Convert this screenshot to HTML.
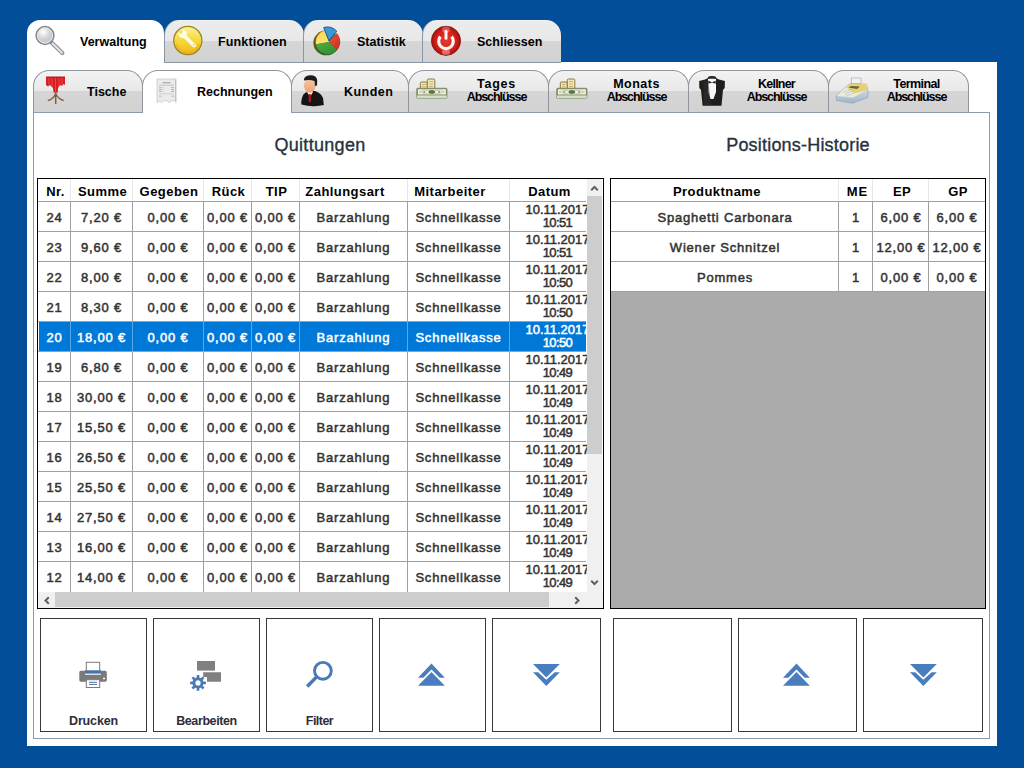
<!DOCTYPE html><html><head><meta charset='utf-8'><style>
*{margin:0;padding:0;box-sizing:border-box}
html,body{width:1024px;height:768px;overflow:hidden;background:#024e98;font-family:"Liberation Sans",sans-serif}
.a{position:absolute}
.tab{position:absolute;border-left:1px solid #8a96a4;border-radius:15px 15px 0 0;
 background:linear-gradient(#f6f6f6 0,#ececec 1.5px,#e8e8e8 21px,#d6d6d6 21px,#d2d2d2 100%);overflow:hidden}
.tab.act{background:#fff;border:none;border-radius:13px 13px 0 0}
.lbl{position:absolute;font-weight:bold;font-size:12.5px;color:#000;white-space:nowrap;line-height:13px}
.itab{position:absolute;border:1px solid #8e959c;border-bottom:none;border-radius:16px 16px 0 0;
 background:linear-gradient(#f2f2f2 0,#e8e8e8 20px,#d6d6d6 20px,#d2d2d2 100%);overflow:hidden}
.itab.act{background:#fff}
.cell{position:absolute;font-weight:normal;-webkit-text-stroke:0.5px currentColor;font-size:13px;color:#333;white-space:nowrap;text-align:center;line-height:13px;letter-spacing:0.8px}
.cur span{letter-spacing:0.8px}
.hd{font-weight:bold;-webkit-text-stroke:0;letter-spacing:0.45px}
.btn{position:absolute;border:1px solid #383838;background:#fff}
</style></head><body>
<div class='a' style='left:27px;top:62px;width:970px;height:684px;background:#fff'></div>
<div class='tab act' style='left:27px;top:20px;width:137px;height:43px'></div>
<div class='tab' style='left:164px;top:20px;width:140px;height:42px'></div>
<div class='tab' style='left:303px;top:20px;width:120px;height:42px'></div>
<div class='tab' style='left:422px;top:20px;width:139px;height:42px'></div>
<div class='a' style='left:164px;top:62px;width:397px;height:1px;background:#8a96a4'></div>
<div class='lbl' style='left:80px;top:36px'>Verwaltung</div>
<div class='lbl' style='left:218px;top:36px;letter-spacing:0.15px'>Funktionen</div>
<div class='lbl' style='left:357px;top:36px'>Statistik</div>
<div class='lbl' style='left:477px;top:36px'>Schliessen</div>
<div class='a' style='left:33px;top:112px;width:957px;height:627px;border:1px solid #8e9aa6;background:#fff'></div>
<div class='itab' style='left:33px;top:70px;width:110px;height:42px'></div>
<div class='itab act' style='left:142px;top:70px;width:150px;height:43px'></div>
<div class='itab' style='left:291px;top:70px;width:118px;height:42px'></div>
<div class='itab' style='left:408px;top:70px;width:141px;height:42px'></div>
<div class='itab' style='left:548px;top:70px;width:141px;height:42px'></div>
<div class='itab' style='left:688px;top:70px;width:141px;height:42px'></div>
<div class='itab' style='left:828px;top:70px;width:141px;height:42px'></div>
<div class='a' style='left:143px;top:112px;width:148px;height:1px;background:#fff'></div>
<div class='lbl' style='left:87px;top:86px'>Tische</div>
<div class='lbl' style='left:197px;top:86px'>Rechnungen</div>
<div class='lbl' style='left:344px;top:86px;letter-spacing:0.45px'>Kunden</div>
<div class='lbl' style='left:446.5px;width:100px;text-align:center;top:78px;letter-spacing:0.75px'>Tages</div>
<div class='lbl' style='left:446.5px;width:100px;text-align:center;top:90.5px;letter-spacing:-1.05px'>Abschlüsse</div>
<div class='lbl' style='left:586.5px;width:100px;text-align:center;top:78px;letter-spacing:0.5px'>Monats</div>
<div class='lbl' style='left:586.5px;width:100px;text-align:center;top:90.5px;letter-spacing:-1.05px'>Abschlüsse</div>
<div class='lbl' style='left:726.5px;width:100px;text-align:center;top:78px;letter-spacing:-0.8px'>Kellner</div>
<div class='lbl' style='left:726.5px;width:100px;text-align:center;top:90.5px;letter-spacing:-1.05px'>Abschlüsse</div>
<div class='lbl' style='left:866.5px;width:100px;text-align:center;top:78px;letter-spacing:-0.6px'>Terminal</div>
<div class='lbl' style='left:866.5px;width:100px;text-align:center;top:90.5px;letter-spacing:-1.05px'>Abschlüsse</div>
<div class='a' style='left:220px;width:200px;text-align:center;top:134.5px;font-size:18px;color:#28323e;line-height:20px;letter-spacing:0.3px;-webkit-text-stroke:0.35px #28323e'>Quittungen</div>
<div class='a' style='left:698px;width:200px;text-align:center;top:134.5px;font-size:18px;color:#28323e;line-height:20px;letter-spacing:0.2px;-webkit-text-stroke:0.35px #28323e'>Positions-Historie</div>
<div class='a' style='left:37px;top:178px;width:567px;height:431px;border:1px solid #000;background:#fff;overflow:hidden'>
<div class='cell hd' style='left:1.5px;width:32px;top:6px;color:#000'>Nr.</div><div class='cell hd' style='left:33.5px;width:62px;top:6px;color:#000'>Summe</div><div class='a' style='left:32px;top:0px;width:1px;height:22px;background:#e8e8e8'></div><div class='cell hd' style='left:95.5px;width:71px;top:6px;color:#000'>Gegeben</div><div class='a' style='left:94px;top:0px;width:1px;height:22px;background:#e8e8e8'></div><div class='cell hd' style='left:166.5px;width:48px;top:6px;color:#000'>Rück</div><div class='a' style='left:165px;top:0px;width:1px;height:22px;background:#e8e8e8'></div><div class='cell hd' style='left:214.5px;width:48px;top:6px;color:#000'>TIP</div><div class='a' style='left:213px;top:0px;width:1px;height:22px;background:#e8e8e8'></div><div class='cell hd' style='left:253px;width:108px;top:6px;color:#000'>Zahlungsart</div><div class='a' style='left:261px;top:0px;width:1px;height:22px;background:#e8e8e8'></div><div class='cell hd' style='left:361px;width:102px;top:6px;color:#000'>Mitarbeiter</div><div class='a' style='left:369px;top:0px;width:1px;height:22px;background:#e8e8e8'></div><div class='cell hd' style='left:463px;width:97px;top:6px;color:#000'>Datum</div><div class='a' style='left:471px;top:0px;width:1px;height:22px;background:#e8e8e8'></div><div class='a' style='left:0px;top:22px;width:548px;height:1px;background:#a0a0a0'></div><div class='cell' style='left:0.5px;width:32px;top:31.5px;color:#333'><span>24</span></div><div class='cell cur' style='left:32.5px;width:62px;top:31.5px;color:#333'><span>7,20 €</span></div><div class='cell cur' style='left:94.5px;width:71px;top:31.5px;color:#333'><span>0,00 €</span></div><div class='cell cur' style='left:165.5px;width:48px;top:31.5px;color:#333'><span>0,00 €</span></div><div class='cell cur' style='left:213.5px;width:48px;top:31.5px;color:#333'><span>0,00 €</span></div><div class='cell' style='left:261.5px;width:108px;top:31.5px;color:#333'><span>Barzahlung</span></div><div class='cell' style='left:369.5px;width:102px;top:31.5px;color:#333'><span>Schnellkasse</span></div><div class='cell' style='left:471px;width:97px;top:24px;color:#333;letter-spacing:0'>10.11.2017<br><span style='letter-spacing:-0.6px'>10:51</span></div><div class='a' style='left:0px;top:52px;width:548px;height:1px;background:#a0a0a0'></div><div class='cell' style='left:0.5px;width:32px;top:61.5px;color:#333'><span>23</span></div><div class='cell cur' style='left:32.5px;width:62px;top:61.5px;color:#333'><span>9,60 €</span></div><div class='cell cur' style='left:94.5px;width:71px;top:61.5px;color:#333'><span>0,00 €</span></div><div class='cell cur' style='left:165.5px;width:48px;top:61.5px;color:#333'><span>0,00 €</span></div><div class='cell cur' style='left:213.5px;width:48px;top:61.5px;color:#333'><span>0,00 €</span></div><div class='cell' style='left:261.5px;width:108px;top:61.5px;color:#333'><span>Barzahlung</span></div><div class='cell' style='left:369.5px;width:102px;top:61.5px;color:#333'><span>Schnellkasse</span></div><div class='cell' style='left:471px;width:97px;top:54px;color:#333;letter-spacing:0'>10.11.2017<br><span style='letter-spacing:-0.6px'>10:51</span></div><div class='a' style='left:0px;top:82px;width:548px;height:1px;background:#a0a0a0'></div><div class='cell' style='left:0.5px;width:32px;top:91.5px;color:#333'><span>22</span></div><div class='cell cur' style='left:32.5px;width:62px;top:91.5px;color:#333'><span>8,00 €</span></div><div class='cell cur' style='left:94.5px;width:71px;top:91.5px;color:#333'><span>0,00 €</span></div><div class='cell cur' style='left:165.5px;width:48px;top:91.5px;color:#333'><span>0,00 €</span></div><div class='cell cur' style='left:213.5px;width:48px;top:91.5px;color:#333'><span>0,00 €</span></div><div class='cell' style='left:261.5px;width:108px;top:91.5px;color:#333'><span>Barzahlung</span></div><div class='cell' style='left:369.5px;width:102px;top:91.5px;color:#333'><span>Schnellkasse</span></div><div class='cell' style='left:471px;width:97px;top:84px;color:#333;letter-spacing:0'>10.11.2017<br><span style='letter-spacing:-0.6px'>10:50</span></div><div class='a' style='left:0px;top:112px;width:548px;height:1px;background:#a0a0a0'></div><div class='cell' style='left:0.5px;width:32px;top:121.5px;color:#333'><span>21</span></div><div class='cell cur' style='left:32.5px;width:62px;top:121.5px;color:#333'><span>8,30 €</span></div><div class='cell cur' style='left:94.5px;width:71px;top:121.5px;color:#333'><span>0,00 €</span></div><div class='cell cur' style='left:165.5px;width:48px;top:121.5px;color:#333'><span>0,00 €</span></div><div class='cell cur' style='left:213.5px;width:48px;top:121.5px;color:#333'><span>0,00 €</span></div><div class='cell' style='left:261.5px;width:108px;top:121.5px;color:#333'><span>Barzahlung</span></div><div class='cell' style='left:369.5px;width:102px;top:121.5px;color:#333'><span>Schnellkasse</span></div><div class='cell' style='left:471px;width:97px;top:114px;color:#333;letter-spacing:0'>10.11.2017<br><span style='letter-spacing:-0.6px'>10:50</span></div><div class='a' style='left:0px;top:142px;width:548px;height:1px;background:#a0a0a0'></div><div class='a' style='left:1px;top:143px;width:547px;height:29px;background:#0078d7'></div><div class='cell' style='left:0.5px;width:32px;top:151.5px;color:#fff'><span>20</span></div><div class='cell cur' style='left:32.5px;width:62px;top:151.5px;color:#fff'><span>18,00 €</span></div><div class='cell cur' style='left:94.5px;width:71px;top:151.5px;color:#fff'><span>0,00 €</span></div><div class='cell cur' style='left:165.5px;width:48px;top:151.5px;color:#fff'><span>0,00 €</span></div><div class='cell cur' style='left:213.5px;width:48px;top:151.5px;color:#fff'><span>0,00 €</span></div><div class='cell' style='left:261.5px;width:108px;top:151.5px;color:#fff'><span>Barzahlung</span></div><div class='cell' style='left:369.5px;width:102px;top:151.5px;color:#fff'><span>Schnellkasse</span></div><div class='cell' style='left:471px;width:97px;top:144px;color:#fff;letter-spacing:0'>10.11.2017<br><span style='letter-spacing:-0.6px'>10:50</span></div><div class='a' style='left:0px;top:172px;width:548px;height:1px;background:#a0a0a0'></div><div class='cell' style='left:0.5px;width:32px;top:181.5px;color:#333'><span>19</span></div><div class='cell cur' style='left:32.5px;width:62px;top:181.5px;color:#333'><span>6,80 €</span></div><div class='cell cur' style='left:94.5px;width:71px;top:181.5px;color:#333'><span>0,00 €</span></div><div class='cell cur' style='left:165.5px;width:48px;top:181.5px;color:#333'><span>0,00 €</span></div><div class='cell cur' style='left:213.5px;width:48px;top:181.5px;color:#333'><span>0,00 €</span></div><div class='cell' style='left:261.5px;width:108px;top:181.5px;color:#333'><span>Barzahlung</span></div><div class='cell' style='left:369.5px;width:102px;top:181.5px;color:#333'><span>Schnellkasse</span></div><div class='cell' style='left:471px;width:97px;top:174px;color:#333;letter-spacing:0'>10.11.2017<br><span style='letter-spacing:-0.6px'>10:49</span></div><div class='a' style='left:0px;top:202px;width:548px;height:1px;background:#a0a0a0'></div><div class='cell' style='left:0.5px;width:32px;top:211.5px;color:#333'><span>18</span></div><div class='cell cur' style='left:32.5px;width:62px;top:211.5px;color:#333'><span>30,00 €</span></div><div class='cell cur' style='left:94.5px;width:71px;top:211.5px;color:#333'><span>0,00 €</span></div><div class='cell cur' style='left:165.5px;width:48px;top:211.5px;color:#333'><span>0,00 €</span></div><div class='cell cur' style='left:213.5px;width:48px;top:211.5px;color:#333'><span>0,00 €</span></div><div class='cell' style='left:261.5px;width:108px;top:211.5px;color:#333'><span>Barzahlung</span></div><div class='cell' style='left:369.5px;width:102px;top:211.5px;color:#333'><span>Schnellkasse</span></div><div class='cell' style='left:471px;width:97px;top:204px;color:#333;letter-spacing:0'>10.11.2017<br><span style='letter-spacing:-0.6px'>10:49</span></div><div class='a' style='left:0px;top:232px;width:548px;height:1px;background:#a0a0a0'></div><div class='cell' style='left:0.5px;width:32px;top:241.5px;color:#333'><span>17</span></div><div class='cell cur' style='left:32.5px;width:62px;top:241.5px;color:#333'><span>15,50 €</span></div><div class='cell cur' style='left:94.5px;width:71px;top:241.5px;color:#333'><span>0,00 €</span></div><div class='cell cur' style='left:165.5px;width:48px;top:241.5px;color:#333'><span>0,00 €</span></div><div class='cell cur' style='left:213.5px;width:48px;top:241.5px;color:#333'><span>0,00 €</span></div><div class='cell' style='left:261.5px;width:108px;top:241.5px;color:#333'><span>Barzahlung</span></div><div class='cell' style='left:369.5px;width:102px;top:241.5px;color:#333'><span>Schnellkasse</span></div><div class='cell' style='left:471px;width:97px;top:234px;color:#333;letter-spacing:0'>10.11.2017<br><span style='letter-spacing:-0.6px'>10:49</span></div><div class='a' style='left:0px;top:262px;width:548px;height:1px;background:#a0a0a0'></div><div class='cell' style='left:0.5px;width:32px;top:271.5px;color:#333'><span>16</span></div><div class='cell cur' style='left:32.5px;width:62px;top:271.5px;color:#333'><span>26,50 €</span></div><div class='cell cur' style='left:94.5px;width:71px;top:271.5px;color:#333'><span>0,00 €</span></div><div class='cell cur' style='left:165.5px;width:48px;top:271.5px;color:#333'><span>0,00 €</span></div><div class='cell cur' style='left:213.5px;width:48px;top:271.5px;color:#333'><span>0,00 €</span></div><div class='cell' style='left:261.5px;width:108px;top:271.5px;color:#333'><span>Barzahlung</span></div><div class='cell' style='left:369.5px;width:102px;top:271.5px;color:#333'><span>Schnellkasse</span></div><div class='cell' style='left:471px;width:97px;top:264px;color:#333;letter-spacing:0'>10.11.2017<br><span style='letter-spacing:-0.6px'>10:49</span></div><div class='a' style='left:0px;top:292px;width:548px;height:1px;background:#a0a0a0'></div><div class='cell' style='left:0.5px;width:32px;top:301.5px;color:#333'><span>15</span></div><div class='cell cur' style='left:32.5px;width:62px;top:301.5px;color:#333'><span>25,50 €</span></div><div class='cell cur' style='left:94.5px;width:71px;top:301.5px;color:#333'><span>0,00 €</span></div><div class='cell cur' style='left:165.5px;width:48px;top:301.5px;color:#333'><span>0,00 €</span></div><div class='cell cur' style='left:213.5px;width:48px;top:301.5px;color:#333'><span>0,00 €</span></div><div class='cell' style='left:261.5px;width:108px;top:301.5px;color:#333'><span>Barzahlung</span></div><div class='cell' style='left:369.5px;width:102px;top:301.5px;color:#333'><span>Schnellkasse</span></div><div class='cell' style='left:471px;width:97px;top:294px;color:#333;letter-spacing:0'>10.11.2017<br><span style='letter-spacing:-0.6px'>10:49</span></div><div class='a' style='left:0px;top:322px;width:548px;height:1px;background:#a0a0a0'></div><div class='cell' style='left:0.5px;width:32px;top:331.5px;color:#333'><span>14</span></div><div class='cell cur' style='left:32.5px;width:62px;top:331.5px;color:#333'><span>27,50 €</span></div><div class='cell cur' style='left:94.5px;width:71px;top:331.5px;color:#333'><span>0,00 €</span></div><div class='cell cur' style='left:165.5px;width:48px;top:331.5px;color:#333'><span>0,00 €</span></div><div class='cell cur' style='left:213.5px;width:48px;top:331.5px;color:#333'><span>0,00 €</span></div><div class='cell' style='left:261.5px;width:108px;top:331.5px;color:#333'><span>Barzahlung</span></div><div class='cell' style='left:369.5px;width:102px;top:331.5px;color:#333'><span>Schnellkasse</span></div><div class='cell' style='left:471px;width:97px;top:324px;color:#333;letter-spacing:0'>10.11.2017<br><span style='letter-spacing:-0.6px'>10:49</span></div><div class='a' style='left:0px;top:352px;width:548px;height:1px;background:#a0a0a0'></div><div class='cell' style='left:0.5px;width:32px;top:361.5px;color:#333'><span>13</span></div><div class='cell cur' style='left:32.5px;width:62px;top:361.5px;color:#333'><span>16,00 €</span></div><div class='cell cur' style='left:94.5px;width:71px;top:361.5px;color:#333'><span>0,00 €</span></div><div class='cell cur' style='left:165.5px;width:48px;top:361.5px;color:#333'><span>0,00 €</span></div><div class='cell cur' style='left:213.5px;width:48px;top:361.5px;color:#333'><span>0,00 €</span></div><div class='cell' style='left:261.5px;width:108px;top:361.5px;color:#333'><span>Barzahlung</span></div><div class='cell' style='left:369.5px;width:102px;top:361.5px;color:#333'><span>Schnellkasse</span></div><div class='cell' style='left:471px;width:97px;top:354px;color:#333;letter-spacing:0'>10.11.2017<br><span style='letter-spacing:-0.6px'>10:49</span></div><div class='a' style='left:0px;top:382px;width:548px;height:1px;background:#a0a0a0'></div><div class='cell' style='left:0.5px;width:32px;top:391.5px;color:#333'><span>12</span></div><div class='cell cur' style='left:32.5px;width:62px;top:391.5px;color:#333'><span>14,00 €</span></div><div class='cell cur' style='left:94.5px;width:71px;top:391.5px;color:#333'><span>0,00 €</span></div><div class='cell cur' style='left:165.5px;width:48px;top:391.5px;color:#333'><span>0,00 €</span></div><div class='cell cur' style='left:213.5px;width:48px;top:391.5px;color:#333'><span>0,00 €</span></div><div class='cell' style='left:261.5px;width:108px;top:391.5px;color:#333'><span>Barzahlung</span></div><div class='cell' style='left:369.5px;width:102px;top:391.5px;color:#333'><span>Schnellkasse</span></div><div class='cell' style='left:471px;width:97px;top:384px;color:#333;letter-spacing:0'>10.11.2017<br><span style='letter-spacing:-0.6px'>10:49</span></div><div class='a' style='left:32px;top:22px;width:1px;height:400px;background:#a0a0a0'></div><div class='a' style='left:94px;top:22px;width:1px;height:400px;background:#a0a0a0'></div><div class='a' style='left:165px;top:22px;width:1px;height:400px;background:#a0a0a0'></div><div class='a' style='left:213px;top:22px;width:1px;height:400px;background:#a0a0a0'></div><div class='a' style='left:261px;top:22px;width:1px;height:400px;background:#a0a0a0'></div><div class='a' style='left:369px;top:22px;width:1px;height:400px;background:#a0a0a0'></div><div class='a' style='left:471px;top:22px;width:1px;height:400px;background:#a0a0a0'></div><div class='a' style='left:32px;top:143px;width:1px;height:29px;background:#5aa6e6'></div><div class='a' style='left:94px;top:143px;width:1px;height:29px;background:#5aa6e6'></div><div class='a' style='left:165px;top:143px;width:1px;height:29px;background:#5aa6e6'></div><div class='a' style='left:213px;top:143px;width:1px;height:29px;background:#5aa6e6'></div><div class='a' style='left:261px;top:143px;width:1px;height:29px;background:#5aa6e6'></div><div class='a' style='left:369px;top:143px;width:1px;height:29px;background:#5aa6e6'></div><div class='a' style='left:471px;top:143px;width:1px;height:29px;background:#5aa6e6'></div><div class='a' style='left:549px;top:0px;width:15px;height:413px;background:#f0f0f0'></div><div class='a' style='left:549px;top:17px;width:15px;height:258px;background:#cdcdcd'></div><div class='a' style='left:0px;top:413px;width:565px;height:16px;background:#f0f0f0'></div><div class='a' style='left:17px;top:413px;width:494px;height:15px;background:#cdcdcd'></div><svg class='a' style='left:551px;top:4px' width='11' height='10'><path d='M2.2 7.3 L5.5 4 L8.8 7.3' fill='none' stroke='#606060' stroke-width='2'/></svg><svg class='a' style='left:551px;top:399px' width='11' height='10'><path d='M2.2 2.7 L5.5 6 L8.8 2.7' fill='none' stroke='#606060' stroke-width='2'/></svg><svg class='a' style='left:4px;top:416px' width='10' height='11'><path d='M6.8 2.2 L3.5 5.5 L6.8 8.8' fill='none' stroke='#606060' stroke-width='2'/></svg><svg class='a' style='left:534px;top:416px' width='10' height='11'><path d='M3.2 2.2 L6.5 5.5 L3.2 8.8' fill='none' stroke='#606060' stroke-width='2'/></svg>
</div>
<div class='a' style='left:610px;top:178px;width:376px;height:431px;border:1px solid #000;background:#ababab;overflow:hidden'>
<div class='a' style='left:0;top:0;width:374px;height:113px;background:#fff'></div><div class='cell hd' style='left:-8px;width:228px;top:6px;color:#000;'>Produktname</div><div class='cell hd' style='left:229.5px;width:34px;top:6px;color:#000;letter-spacing:1px;'>ME</div><div class='a' style='left:227px;top:0px;width:1px;height:22px;background:#e8e8e8'></div><div class='cell hd' style='left:263px;width:56px;top:6px;color:#000;'>EP</div><div class='a' style='left:261px;top:0px;width:1px;height:22px;background:#e8e8e8'></div><div class='cell hd' style='left:319px;width:56px;top:6px;color:#000;'>GP</div><div class='a' style='left:317px;top:0px;width:1px;height:22px;background:#e8e8e8'></div><div class='a' style='left:0px;top:22px;width:374px;height:1px;background:#a0a0a0'></div><div class='cell' style='left:0px;width:228px;top:31.5px'><span>Spaghetti Carbonara</span></div><div class='cell' style='left:228px;width:34px;top:31.5px'><span>1</span></div><div class='cell cur' style='left:262px;width:56px;top:31.5px'><span>6,00 €</span></div><div class='cell cur' style='left:318px;width:56px;top:31.5px'><span>6,00 €</span></div><div class='a' style='left:0px;top:52px;width:374px;height:1px;background:#a0a0a0'></div><div class='cell' style='left:0px;width:228px;top:61.5px'><span>Wiener Schnitzel</span></div><div class='cell' style='left:228px;width:34px;top:61.5px'><span>1</span></div><div class='cell cur' style='left:262px;width:56px;top:61.5px'><span>12,00 €</span></div><div class='cell cur' style='left:318px;width:56px;top:61.5px'><span>12,00 €</span></div><div class='a' style='left:0px;top:82px;width:374px;height:1px;background:#a0a0a0'></div><div class='cell' style='left:0px;width:228px;top:91.5px'><span>Pommes</span></div><div class='cell' style='left:228px;width:34px;top:91.5px'><span>1</span></div><div class='cell cur' style='left:262px;width:56px;top:91.5px'><span>0,00 €</span></div><div class='cell cur' style='left:318px;width:56px;top:91.5px'><span>0,00 €</span></div><div class='a' style='left:0px;top:112px;width:374px;height:1px;background:#a0a0a0'></div><div class='a' style='left:227px;top:22px;width:1px;height:91px;background:#a0a0a0'></div><div class='a' style='left:261px;top:22px;width:1px;height:91px;background:#a0a0a0'></div><div class='a' style='left:317px;top:22px;width:1px;height:91px;background:#a0a0a0'></div>
</div>
<div class='btn' style='left:40px;top:618px;width:107px;height:114px'></div>
<div class='btn' style='left:153px;top:618px;width:107px;height:114px'></div>
<div class='btn' style='left:266px;top:618px;width:107px;height:114px'></div>
<div class='btn' style='left:379px;top:618px;width:107px;height:114px'></div>
<div class='btn' style='left:492px;top:618px;width:109px;height:114px'></div>
<div class='btn' style='left:613px;top:618px;width:119px;height:114px'></div>
<div class='btn' style='left:738px;top:618px;width:119px;height:114px'></div>
<div class='btn' style='left:863px;top:618px;width:120px;height:114px'></div>
<div class='lbl' style='left:40px;width:107px;text-align:center;top:715.3px;color:#2d2d3a;letter-spacing:-0.15px'>Drucken</div>
<div class='lbl' style='left:153px;width:107px;text-align:center;top:715.3px;color:#2d2d3a;letter-spacing:-0.4px'>Bearbeiten</div>
<div class='lbl' style='left:266px;width:107px;text-align:center;top:715.3px;color:#2d2d3a;letter-spacing:-0.55px'>Filter</div>
<svg class='a' style='left:0;top:0' width='1024' height='768' viewBox='0 0 1024 768'><defs>
<radialGradient id="glass" cx="0.4" cy="0.3" r="0.75"><stop offset="0" stop-color="#ffffff"/><stop offset="0.55" stop-color="#cfcfcf"/><stop offset="0.85" stop-color="#b9cde2"/><stop offset="1" stop-color="#d8e8f8"/></radialGradient>
<linearGradient id="gold" x1="0" y1="0" x2="0" y2="1"><stop offset="0" stop-color="#fbf39a"/><stop offset="0.45" stop-color="#f6dc3c"/><stop offset="1" stop-color="#eeb818"/></linearGradient>
<radialGradient id="redg" cx="0.5" cy="0.5" r="0.5"><stop offset="0" stop-color="#e83a30"/><stop offset="0.7" stop-color="#d42018"/><stop offset="1" stop-color="#a01010"/></radialGradient>
<linearGradient id="face" x1="0" y1="0" x2="0" y2="1"><stop offset="0" stop-color="#f6c8a8"/><stop offset="1" stop-color="#f0a070"/></linearGradient>
<linearGradient id="blueb" x1="0" y1="0" x2="0" y2="1"><stop offset="0" stop-color="#dde8f2"/><stop offset="1" stop-color="#9fb4c8"/></linearGradient>
<linearGradient id="rim" x1="0" y1="0" x2="0" y2="1"><stop offset="0" stop-color="#8a6418"/><stop offset="0.5" stop-color="#6a5a18"/><stop offset="1" stop-color="#2a6a24"/></linearGradient>
<linearGradient id="yel" x1="0" y1="0" x2="0" y2="1"><stop offset="0" stop-color="#f8d850"/><stop offset="1" stop-color="#fbe27a"/></linearGradient>
<linearGradient id="grn" x1="0" y1="0" x2="1" y2="1"><stop offset="0" stop-color="#52b040"/><stop offset="1" stop-color="#2c8a34"/></linearGradient>
<linearGradient id="rd" x1="0" y1="0" x2="1" y2="1"><stop offset="0" stop-color="#e85a38"/><stop offset="1" stop-color="#c82828"/></linearGradient>
</defs>
<!-- Verwaltung magnifier -->
<line x1="52" y1="43" x2="62.3" y2="53" stroke="#8e8e8e" stroke-width="4.2" stroke-linecap="round"/>
<line x1="52.5" y1="43.5" x2="62" y2="52.7" stroke="#e6e6e6" stroke-width="2" stroke-linecap="round"/>
<circle cx="45" cy="35.5" r="8.9" fill="url(#glass)" stroke="#858585" stroke-width="1.5"/>
<circle cx="45" cy="35.5" r="7.6" fill="none" stroke="#ececec" stroke-width="0.8"/>
<!-- Funktionen wrench coin -->
<circle cx="187.8" cy="40.5" r="14.1" fill="url(#gold)" stroke="#9c8424" stroke-width="1.3"/>
<path d="M176 44 A12.5 12.5 0 0 0 199.6 44" fill="none" stroke="#e8a818" stroke-width="1.5" opacity="0.6"/>
<path d="M184.3 35.8 L194 45.5" stroke="#fffbe8" stroke-width="3.8" stroke-linecap="round"/>
<circle cx="182.6" cy="33.9" r="4.2" fill="#fffbe8"/>
<circle cx="180.8" cy="31.9" r="2" fill="#f7e060"/>
<circle cx="193.6" cy="45.1" r="0.8" fill="#d8b840"/>
<!-- Statistik pie -->
<ellipse cx="326.4" cy="42.8" rx="13.1" ry="12.5" fill="url(#rim)"/>
<path d="M329.1 42.1 L325.3 30.4 A12.2 12.2 0 0 0 316 44.2 Z" fill="url(#yel)"/>
<path d="M329.1 42.1 L316 44.2 A12.2 12.2 0 0 0 337 50 Z" fill="url(#grn)"/>
<path d="M329.1 42.1 L337 50 A12.2 12.2 0 0 0 336.6 33.1 Z" fill="url(#rd)"/>
<path d="M328.9 40.8 L323.7 27.5 A13 13 0 0 1 336.8 31.25 Z" fill="#3a98d6" stroke="#16508a" stroke-width="0.9" stroke-linejoin="round"/>
<!-- Schliessen power -->
<circle cx="446" cy="40.8" r="14.6" fill="url(#redg)" stroke="#8a1414" stroke-width="0.8"/>
<ellipse cx="446" cy="29.8" rx="4" ry="3.2" fill="#ffb0a8" opacity="0.4"/>
<ellipse cx="446" cy="52.2" rx="4" ry="2.6" fill="#ffc0b8" opacity="0.5"/>
<path d="M440.4 36.6 A7.3 7.3 0 1 0 451.6 36.6" fill="none" stroke="#fff4f4" stroke-width="3.2"/>
<line x1="446" y1="31.2" x2="446" y2="38.3" stroke="#fff4f4" stroke-width="3" stroke-linecap="round"/>
<!-- Tische table -->
<path d="M46 77 L65 77 L65 85 L63.5 84 L62 86 L60 85 L58 88 L57.8 92.5 L53.6 92.5 L53 88 L50 85 L48 86.5 L46 85 Z" fill="#d61e22"/>
<rect x="46" y="76.5" width="19" height="1.2" fill="#b81820"/>
<path d="M49 78 V85 M52 78 V87 M55.5 78 V92 M59 78 V87 M62 78 V85" stroke="#f06060" stroke-width="0.7"/>
<path d="M55.7 92 V104 M55.5 94 C54.5 96.5 51 99.6 47.8 100.6 M55.9 94 C56.9 96.5 60.4 99.6 63.6 100.5" fill="none" stroke="#84603a" stroke-width="1.5"/>
<!-- Rechnungen receipt -->
<path d="M157 79 H176 V102.5 Q174.5 99.8 172.2 100.6 Q170.2 101.4 169 102.6 Q167 99.8 164.5 100.6 Q162.5 101.4 161.5 102.6 Q159.5 99.8 157 102.5 Z" fill="#ebebeb" stroke="#c6c6c6" stroke-width="0.8"/>
<path d="M175.6 79.5 V101" stroke="#bdbdbd" stroke-width="1"/>
<path d="M162.5 82.8 H170.5" stroke="#9a9a9a" stroke-width="1"/>
<path d="M159 85.2 H174" stroke="#b4b4b4" stroke-width="0.7"/>
<path d="M159 87.6 H161.8 M163 87.6 H163.6 M171 87.6 H174 M159 89.5 H161.8 M163 89.5 H163.6 M171 89.5 H174 M159 91.4 H161.8 M163 91.4 H163.6 M171 91.4 H174" stroke="#a8a8a8" stroke-width="0.8"/>
<path d="M159 93.8 H174" stroke="#c0c0c0" stroke-width="0.6"/>
<path d="M159 96.2 H161.5 M171.5 96.2 H174" stroke="#a8a8a8" stroke-width="0.8"/>
<!-- Kunden person -->
<ellipse cx="314" cy="104" rx="10" ry="2.5" fill="#b8b8b8" opacity="0.6"/>
<path d="M301.3 104.5 Q301 96 305 93 L309 91 L315 91 Q321 93 323 98 L323.8 105 Q313 107.5 301.3 104.5 Z" fill="#141414"/>
<path d="M307 92 L310 97 L313 92 Z" fill="#f4f4f4"/>
<path d="M308.8 94 L310.8 94 L311 101.5 L309.8 102.5 L308.6 101.5 Z" fill="#c0101a"/>
<ellipse cx="309.7" cy="85.8" rx="5.8" ry="7" fill="url(#face)"/>
<path d="M303.8 80.5 Q304 75.5 310 75.2 Q316.5 75 317.2 80 L317 85.5 L315 86 L314.5 81 Q310 79.5 303.8 80.5 Z" fill="#1c1c1c"/>
<!-- money Tages & Monats -->
<g id="money">
<path d="M420.3 88.8 V83.2 Q420.3 82 421.5 82 H426 Q427.3 82 427.3 83.2 V88.8 Z" fill="#f2e6b0" stroke="#7e6a30" stroke-width="0.9"/>
<path d="M427.3 88.8 V80.2 Q427.3 79 428.5 79 H433.6 Q434.8 79 434.8 80.2 V88.8 Z" fill="#f4e8b4" stroke="#7e6a30" stroke-width="0.9"/>
<path d="M422 84.5 H425.6 M422 86.8 H425.6 M429 81.6 H433 M429 84 H433 M429 86.5 H433" stroke="#b09a58" stroke-width="0.7"/>
<rect x="416.5" y="88.2" width="30.6" height="10.2" rx="1.2" fill="#dfe8d0" stroke="#8a9478" stroke-width="0.8"/>
<rect x="417.3" y="88.8" width="29" height="6.2" fill="#f2f4dc" stroke="#5f6c4c" stroke-width="0.8"/>
<path d="M417.5 96.3 H446 M417.5 97.6 H446" stroke="#c8d8c0" stroke-width="0.6"/>
<ellipse cx="431.8" cy="91.9" rx="3.3" ry="1.9" fill="#5c7048"/>
<ellipse cx="424.3" cy="91.9" rx="1.1" ry="0.9" fill="#8a9a78"/>
<ellipse cx="439.2" cy="91.9" rx="1.1" ry="0.9" fill="#8a9a78"/>
<path d="M419 91.9 Q425 89.3 428.5 90.6 M435 90.6 Q438.5 89.3 444.6 91.9 M419 91.9 Q425 94.5 428.5 93.2 M435 93.2 Q438.5 94.5 444.6 91.9" fill="none" stroke="#a8b490" stroke-width="0.6"/>
</g>
<g transform="translate(140 0)">
<path d="M420.3 88.8 V83.2 Q420.3 82 421.5 82 H426 Q427.3 82 427.3 83.2 V88.8 Z" fill="#f2e6b0" stroke="#7e6a30" stroke-width="0.9"/>
<path d="M427.3 88.8 V80.2 Q427.3 79 428.5 79 H433.6 Q434.8 79 434.8 80.2 V88.8 Z" fill="#f4e8b4" stroke="#7e6a30" stroke-width="0.9"/>
<path d="M422 84.5 H425.6 M422 86.8 H425.6 M429 81.6 H433 M429 84 H433 M429 86.5 H433" stroke="#b09a58" stroke-width="0.7"/>
<rect x="416.5" y="88.2" width="30.6" height="10.2" rx="1.2" fill="#dfe8d0" stroke="#8a9478" stroke-width="0.8"/>
<rect x="417.3" y="88.8" width="29" height="6.2" fill="#f2f4dc" stroke="#5f6c4c" stroke-width="0.8"/>
<path d="M417.5 96.3 H446 M417.5 97.6 H446" stroke="#c8d8c0" stroke-width="0.6"/>
<ellipse cx="431.8" cy="91.9" rx="3.3" ry="1.9" fill="#5c7048"/>
<ellipse cx="424.3" cy="91.9" rx="1.1" ry="0.9" fill="#8a9a78"/>
<ellipse cx="439.2" cy="91.9" rx="1.1" ry="0.9" fill="#8a9a78"/>
<path d="M419 91.9 Q425 89.3 428.5 90.6 M435 90.6 Q438.5 89.3 444.6 91.9 M419 91.9 Q425 94.5 428.5 93.2 M435 93.2 Q438.5 94.5 444.6 91.9" fill="none" stroke="#a8b490" stroke-width="0.6"/>
</g>
<!-- Kellner tuxedo -->
<path d="M699.2 81 L705 79.5 L708 78 L716 78 L719 79.5 L724.9 81 L724.7 88 L723 90 L721.5 105.8 L702.6 105.8 L701 90 L699.3 88 Z" fill="#1e1e1e"/>
<path d="M708 78.5 L716 78.5 L716 92 L713.5 99 L710.5 99 L708 92 Z" fill="#f6f6f6"/>
<path d="M707.8 77 Q712 75.2 716.3 77 L715.5 79 Q712 77.5 708.5 79 Z" fill="#222"/>
<path d="M708.3 80.8 L712 82.3 L715.7 80.8 L715.7 83.8 L712 82.6 L708.3 83.8 Z" fill="#222"/>
<path d="M703 82 L708 79 L711 105 L704 105 Z" fill="#2e2e2e" opacity="0.6"/>
<!-- Terminal cash register -->
<path d="M836 96 L849 84 L866.5 84.5 L868 91 L868 97.5 L852.5 103.3 L836.5 100.5 Z" fill="url(#blueb)" stroke="#8da0b4" stroke-width="0.6"/>
<path d="M836.5 96 L849.5 84 L866.5 84.5 L867 90 L853 97.5 Z" fill="#ecebd8"/>
<path d="M846.5 87.5 L850 83 L866 83.5 L867.5 90 L855 93.5 Z" fill="#e6cf78"/>
<path d="M848.5 87.5 L851 86 L860 86.5 L857 89 Z" fill="#5d6a3a"/>
<rect x="851.5" y="78" width="9.5" height="5.5" fill="#f2f2f4" stroke="#a0a0a8" stroke-width="0.6"/>
<path d="M844 92 L852 89 M845 94 L853 91 M846.5 96 L854 93" stroke="#9aa0b0" stroke-width="0.8" stroke-dasharray="1.2 1"/>
<!-- printer -->
<rect x="86.3" y="662.3" width="13.4" height="9.5" fill="#fff" stroke="#7a7a7a" stroke-width="1"/>
<path d="M80.8 670.7 H85 V674.7 H101 V670.7 H105.3 Q106.8 670.7 106.8 672.2 V680.3 Q106.8 681.7 105.3 681.7 H80.8 Q79.3 681.7 79.3 680.3 V672.2 Q79.3 670.7 80.8 670.7 Z" fill="#7a7a7a"/>
<rect x="85" y="670.3" width="16" height="3.3" fill="#4a70a8"/>
<rect x="103" y="677.8" width="2" height="1.4" fill="#fff"/>
<rect x="86.3" y="679.7" width="13.4" height="7.8" fill="#fff" stroke="#7a7a7a" stroke-width="1"/>
<path d="M89 682.3 H97 M89 684.4 H97" stroke="#4a70a8" stroke-width="1"/>
<!-- bearbeiten -->
<rect x="197" y="661" width="18" height="9.6" fill="#808080"/>
<path d="M203.2 672.2 H221 V681.8 H207 L207 677 L203.2 677 Z" fill="#808080"/>
<g transform="translate(198 682.9)">
<path d="M-1.3 -7.8 H1.3 L1.5 -5.2 L3.7 -4.3 L5.6 -6 L7.4 -4.2 L5.7 -2.3 L6.5 -0.1 L-0 -0 Z" fill="none"/>
<circle r="5.6" fill="#4a7ab5"/>
<g fill="#4a7ab5">
<rect x="-1.3" y="-7.9" width="2.6" height="3"/>
<rect x="-1.3" y="4.9" width="2.6" height="3"/>
<rect x="-7.9" y="-1.3" width="3" height="2.6"/>
<rect x="4.9" y="-1.3" width="3" height="2.6"/>
<rect x="-1.3" y="-7.9" width="2.6" height="3" transform="rotate(45)"/>
<rect x="-1.3" y="-7.9" width="2.6" height="3" transform="rotate(135)"/>
<rect x="-1.3" y="-7.9" width="2.6" height="3" transform="rotate(225)"/>
<rect x="-1.3" y="-7.9" width="2.6" height="3" transform="rotate(315)"/>
</g>
<circle r="2.6" fill="#fff"/>
</g>
<!-- filter magnifier -->
<circle cx="322.9" cy="670.8" r="8.4" fill="none" stroke="#4a7ab5" stroke-width="2.9"/>
<line x1="316.5" y1="677" x2="307.2" y2="686.5" stroke="#4a7ab5" stroke-width="3.4"/>
<!-- arrows -->
<g id="upar" fill="#4a7dbd">
<path d="M418 677.8 L431.5 663.5 L444.8 677.8 L439.7 677.8 L431.5 669.6 L423.3 677.8 Z"/>
<path d="M431.5 671.9 L444.8 685.8 L418 685.8 Z"/>
</g>
<g id="dnar" fill="#4a7dbd">
<path d="M533 664.1 L559.8 664.1 L546.3 677.6 Z"/>
<path d="M533 672.3 L538.1 672.3 L546.3 679.8 L554.7 672.3 L559.8 672.3 L546.3 686 Z"/>
</g>
<g transform="translate(365 0)" fill="#4a7dbd">
<path d="M418 677.8 L431.5 663.5 L444.8 677.8 L439.7 677.8 L431.5 669.6 L423.3 677.8 Z"/>
<path d="M431.5 671.9 L444.8 685.8 L418 685.8 Z"/>
</g>
<g transform="translate(377 0)" fill="#4a7dbd">
<path d="M533 664.1 L559.8 664.1 L546.3 677.6 Z"/>
<path d="M533 672.3 L538.1 672.3 L546.3 679.8 L554.7 672.3 L559.8 672.3 L546.3 686 Z"/>
</g>
</svg>
</body></html>
